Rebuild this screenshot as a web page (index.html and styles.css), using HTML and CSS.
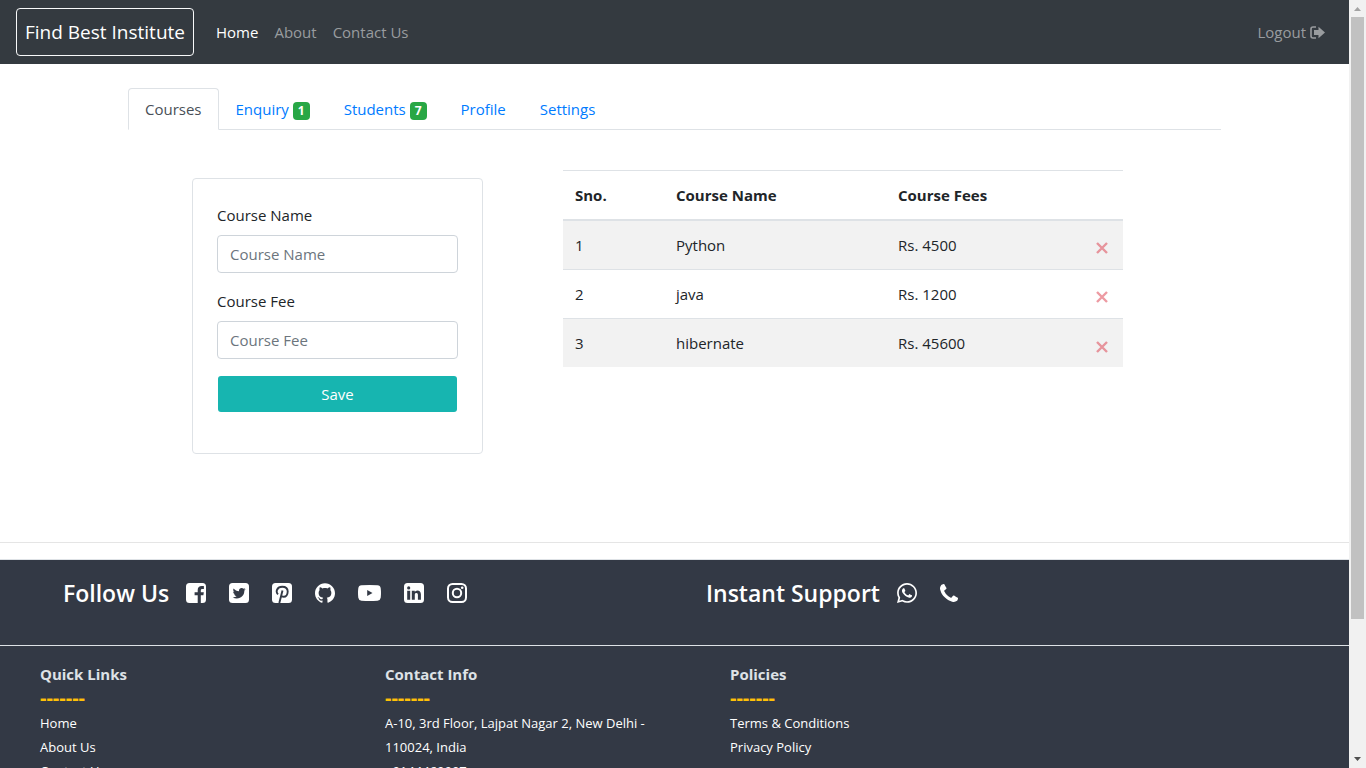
FILE: index.html
```html
<!DOCTYPE html>
<html lang="en">
<head>
<meta charset="utf-8">
<title>Find Best Institute</title>
<link rel="stylesheet" href="styles.css">
</head>
<body>
<div class="window">
<div class="page">
  <nav class="navbar">
    <a class="brand" href="#">Find Best Institute</a>
    <a class="nav-link active" href="#">Home</a>
    <a class="nav-link" href="#">About</a>
    <a class="nav-link" href="#">Contact Us</a>
    <a class="nav-link logout" href="#">Logout
      <svg width="15" height="13" viewBox="0 0 15 13" aria-hidden="true"><path d="M6 1H3Q1 1 1 3v7q0 2 2 2h3" fill="none" stroke="currentColor" stroke-width="1.6"/><path d="M4 4h4.500V.7L15 6.500 8.500 12.300V9H4z" fill="currentColor"/></svg></a>
  </nav>

  <main class="main">
    <ul class="tabs">
      <li><a class="tab selected" href="#">Courses</a></li>
      <li><a class="tab" href="#">Enquiry <span class="badge">1</span></a></li>
      <li><a class="tab" href="#">Students <span class="badge">7</span></a></li>
      <li><a class="tab" href="#">Profile</a></li>
      <li><a class="tab" href="#">Settings</a></li>
    </ul>
    <div class="panel">
      <form class="card">
        <label for="name">Course Name</label>
        <input id="name" type="text" placeholder="Course Name">
        <label for="fee">Course Fee</label>
        <input id="fee" type="text" placeholder="Course Fee">
        <button class="save" type="button">Save</button>
      </form>
      <table class="courses">
        <thead><tr><th class="c-no">Sno.</th><th class="c-name">Course Name</th><th>Course Fees</th><th class="c-del"></th></tr></thead>
        <tbody>
          <tr><td>1</td><td>Python</td><td>Rs. 4500</td><td><button class="del" type="button" aria-label="Delete Python"><svg width="12" height="12" viewBox="0 0 12 12"><path d="M1 1l10 10M11 1l-10 10"/></svg></button></td></tr>
          <tr><td>2</td><td>java</td><td>Rs. 1200</td><td><button class="del" type="button" aria-label="Delete java"><svg width="12" height="12" viewBox="0 0 12 12"><path d="M1 1l10 10M11 1l-10 10"/></svg></button></td></tr>
          <tr><td>3</td><td>hibernate</td><td>Rs. 45600</td><td><button class="del" type="button" aria-label="Delete hibernate"><svg width="12" height="12" viewBox="0 0 12 12"><path d="M1 1l10 10M11 1l-10 10"/></svg></button></td></tr>
        </tbody>
      </table>
    </div>
  </main>
  <hr class="rule">

  <footer class="footer">
    <div class="social">
      <div class="group">
        <h2>Follow Us</h2>
        <a href="#" aria-label="Facebook"><svg width="20" height="20" viewBox="0 0 20 20"><path fill="#fff" d="M3.500 0h13Q20 0 20 3.500v13Q20 20 16.500 20H14.800v-7.700h2.600l.4-3h-3V7.400c0-.9.3-1.500 1.500-1.500h1.600V3.200c-.3 0-1.200-.1-2.300-.1-2.300 0-3.900 1.400-3.900 4v2.200H8.600v3h3.100V20H3.500Q0 20 0 16.500v-13Q0 0 3.500 0z"/></svg></a>
        <a href="#" aria-label="Twitter"><svg width="20" height="20" viewBox="0 0 20 20"><rect width="20" height="20" rx="3.500" fill="#fff"/><path fill="#333945" transform="translate(3.700 3.700) scale(.54)" d="M23.954 4.569c-.885.389-1.830.654-2.825.775 1.014-.611 1.794-1.574 2.163-2.723-.951.555-2.005.959-3.127 1.184-.896-.959-2.173-1.559-3.591-1.559-2.717 0-4.920 2.203-4.920 4.917 0 .39.045.765.127 1.124C7.691 8.094 4.066 6.130 1.640 3.161c-.427.722-.666 1.561-.666 2.475 0 1.710.87 3.213 2.188 4.096-.807-.026-1.566-.248-2.228-.616v.061c0 2.385 1.693 4.374 3.946 4.827-.413.111-.849.171-1.296.171-.314 0-.615-.03-.916-.086.631 1.953 2.445 3.377 4.604 3.417-1.680 1.319-3.809 2.105-6.102 2.105-.39 0-.779-.023-1.170-.067 2.189 1.394 4.768 2.209 7.557 2.209 9.054 0 13.999-7.496 13.999-13.986 0-.209 0-.42-.015-.63.961-.689 1.800-1.560 2.460-2.548z"/></svg></a>
        <a href="#" aria-label="Pinterest"><svg width="20" height="20" viewBox="0 0 20 20"><rect width="20" height="20" rx="3.500" fill="#fff"/><path d="M6 11.300C3.200 8.500 5.200 3.800 10.200 3.800c3.400 0 5.500 2 5.500 4.800 0 3-1.700 5.200-4 5.200-1.400 0-2.200-.7-2.500-1.500M10.500 7.500L7.300 20" fill="none" stroke="#333945" stroke-width="1.900"/></svg></a>
        <a href="#" aria-label="GitHub"><svg width="20" height="20" viewBox="0 0 24 24"><path fill="#fff" d="M12 .297c-6.630 0-12 5.373-12 12 0 5.303 3.438 9.800 8.205 11.385.6.113.82-.258.82-.577 0-.285-.01-1.040-.015-2.040-3.338.724-4.042-1.610-4.042-1.610C4.422 18.070 3.633 17.700 3.633 17.700c-1.087-.744.084-.729.084-.729 1.205.084 1.838 1.236 1.838 1.236 1.070 1.835 2.809 1.305 3.495.998.108-.776.417-1.305.76-1.605-2.665-.3-5.466-1.332-5.466-5.930 0-1.310.465-2.380 1.235-3.220-.135-.303-.54-1.523.105-3.176 0 0 1.005-.322 3.300 1.230.96-.267 1.980-.399 3-.405 1.020.006 2.040.138 3 .405 2.280-1.552 3.285-1.230 3.285-1.230.645 1.653.24 2.873.12 3.176.765.84 1.230 1.910 1.230 3.220 0 4.610-2.805 5.625-5.475 5.920.42.36.81 1.096.81 2.220 0 1.606-.015 2.896-.015 3.286 0 .315.21.69.825.57C20.565 22.092 24 17.592 24 12.297c0-6.627-5.373-12-12-12"/></svg></a>
        <a href="#" aria-label="YouTube"><svg width="23" height="20" viewBox="0 0 23 20"><path fill="#fff" fill-rule="evenodd" d="M3.500 2.300Q11.500 1.500 19.500 2.300 22.300 2.500 22.700 5.300 23.300 10 22.700 14.700 22.300 17.400 19.500 17.700 11.500 18.500 3.500 17.700.7 17.400.3 14.700-.3 10 .3 5.300.7 2.500 3.500 2.300zM9.200 7v6l5.300-3z"/></svg></a>
        <a href="#" aria-label="LinkedIn"><svg width="20" height="20" viewBox="0 0 20 20"><path fill="#fff" fill-rule="evenodd" d="M3.500 0h13Q20 0 20 3.500v13Q20 20 16.500 20h-13Q0 20 0 16.500v-13Q0 0 3.500 0zM3.200 7.700v9h3v-9zM4.700 3.300a1.600 1.600 0 1 0 0 3.200 1.600 1.600 0 0 0 0-3.200zM7.800 7.700v9h3v-5c0-1 .6-1.700 1.600-1.700s1.500.8 1.500 2v4.700h3v-5.200c0-2.700-1.400-4-3.400-4-1.500 0-2.200.8-2.700 1.500V7.700z"/></svg></a>
        <a href="#" aria-label="Instagram"><svg width="20" height="20" viewBox="0 0 20 20"><rect x="1" y="1" width="18" height="18" rx="4.500" fill="none" stroke="#fff" stroke-width="2"/><circle cx="10" cy="10" r="4.200" fill="none" stroke="#fff" stroke-width="2"/><circle cx="15.200" cy="4.800" r="1.300" fill="#fff"/></svg></a>
      </div>
      <div class="group">
        <h2>Instant Support</h2>
        <a href="#" aria-label="WhatsApp"><svg width="20" height="20" viewBox="0 32 448 448"><path fill="#fff" d="M380.900 97.100C339 55.100 283.200 32 223.900 32c-122.400 0-222 99.600-222 222 0 39.100 10.200 77.300 29.600 111L0 480l117.700-30.900c32.400 17.700 68.900 27 106.100 27h.1c122.300 0 224.100-99.600 224.100-222 0-59.300-25.200-115-67.100-157zm-157 341.600c-33.200 0-65.700-8.900-94-25.700l-6.700-4-69.800 18.300L72 359.200l-4.400-7c-18.500-29.400-28.200-63.300-28.200-98.200 0-101.700 82.800-184.500 184.600-184.500 49.300 0 95.600 19.200 130.400 54.100 34.800 34.900 56.200 81.200 56.100 130.500 0 101.800-84.900 184.600-186.600 184.600zm101.200-138.200c-5.500-2.800-32.800-16.200-37.900-18-5.100-1.900-8.800-2.800-12.500 2.800-3.700 5.600-14.300 18-17.600 21.800-3.200 3.700-6.500 4.200-12 1.400-32.600-16.300-54-29.100-75.500-66-5.700-9.800 5.700-9.100 16.300-30.300 1.800-3.700.9-6.900-.5-9.700-1.400-2.800-12.500-30.100-17.100-41.200-4.500-10.800-9.100-9.300-12.500-9.500-3.200-.2-6.900-.2-10.600-.2-3.700 0-9.700 1.400-14.800 6.900-5.100 5.600-19.400 19-19.400 46.300 0 27.300 19.900 53.700 22.600 57.400 2.800 3.700 39.100 59.700 94.800 83.800 35.200 15.200 49 16.500 66.600 13.900 10.700-1.600 32.800-13.400 37.400-26.400 4.600-13 4.600-24.100 3.200-26.400-1.300-2.500-5-3.900-10.500-6.600z"/></svg></a>
        <a href="#" aria-label="Phone"><svg width="18" height="18" viewBox="0 128 1408 1408"><path fill="#fff" d="M1408 1240q0 27-10 70.500t-21 68.500q-21 50-122 106-94 51-186 51-27 0-53-3.500t-57.500-12.500-47-14.500-55.500-20.500-49-18q-98-35-175-83-127-79-264-216t-216-264q-48-77-83-175-3-9-18-49t-20.500-55.500-14.500-47-12.500-57.500-3.500-53q0-92 51-186 56-101 106-122 25-11 68.500-21t70.500-10q14 0 21 3 18 6 53 76 11 19 30 54t35 63.500 31 53.500q3 4 17.500 25t21.500 35.500 7 28.500q0 20-28.500 50t-62 55-62 53-28.500 46q0 9 5 22.500t8.500 20.500 14 24 11.500 19q76 137 174 235t235 174q2 1 19 11.500t24 14 20.500 8.500 22.500 5q18 0 46-28.500t53-62 55-62 50-28.500q14 0 28.500 7t35.500 21.500 25 17.500q25 15 53.500 31t63.500 35 54 30q70 35 76 53 3 7 3 21z"/></svg></a>
      </div>
    </div>
    <div class="columns">
      <section>
        <h3>Quick Links</h3>
        <div class="dashes">-------</div>
        <a href="#">Home</a>
        <a href="#">About Us</a>
        <a href="#">Contact Us</a>
      </section>
      <section>
        <h3>Contact Info</h3>
        <div class="dashes">-------</div>
        <p>A-10, 3rd Floor, Lajpat Nagar 2, New Delhi - 110024, India</p>
        <p>+9144469997</p>
      </section>
      <section>
        <h3>Policies</h3>
        <div class="dashes">-------</div>
        <a href="#">Terms &amp; Conditions</a>
        <a href="#">Privacy Policy</a>
      </section>
    </div>
  </footer>
</div>
<div class="scrollbar" aria-hidden="true">
  <svg class="arrow" width="17" height="17" viewBox="0 0 17 17"><path fill="#a3a3a3" d="M5 11l3.500-4 3.500 4z"/></svg>
  <div class="track"><div class="thumb"></div></div>
  <svg class="arrow" width="17" height="17" viewBox="0 0 17 17"><path fill="#505050" d="M5 6h7l-3.500 4z"/></svg>
</div>
</div>
</body>
</html>
```
FILE: styles.css
```css
* { box-sizing: border-box; }
body { margin: 0; font: 15px/24px "Segoe UI", "Open Sans", "Noto Sans", sans-serif; color: #212529; background: #fff; }
a { text-decoration: none; }
.window { display: flex; height: 100vh; overflow: hidden; }
.page { flex: 1; min-width: 0; overflow: hidden; }

.navbar { display: flex; align-items: center; padding: 8px 16px; background: #343a40; }
.brand { padding: 8px; margin-right: 14px; border: 1px solid #f8f9fa; border-radius: 4px; font-size: 19px; line-height: 30px; color: #fff; }
.nav-link { padding: 8px; color: #999c9f; }
.nav-link.active { color: #fff; }
.logout { display: flex; align-items: center; gap: 4px; margin-left: auto; }

.main { padding: 24px 128px 72px; }
.tabs { display: flex; margin: 0; padding: 0; list-style: none; border-bottom: 1px solid #dee2e6; }
.tab { display: block; padding: 8px 16px; margin-bottom: -1px; border: 1px solid transparent; border-radius: 4px 4px 0 0; color: #007bff; }
.tab.selected { color: #495057; background: #fff; border-color: #dee2e6 #dee2e6 #fff; }
.badge { display: inline-block; padding: 3px 5px; border-radius: 4px; background: #28a745; color: #fff; font-size: 12px; line-height: 12px; font-weight: 700; }

.panel { display: flex; align-items: flex-start; gap: 80px; padding: 40px 98px 0 64px; }
.card { display: flex; flex-direction: column; flex: 0 0 291px; margin-top: 8px; padding: 24px 24px 40px; border: 1px solid #dee2e6; border-radius: 4px; }
.card label { margin-bottom: 8px; }
.card input { width: 100%; height: 38px; margin: 0 0 16px; padding: 6px 12px; border: 1px solid #ced4da; border-radius: 4px; font: inherit; background: #fff; }
.card input::placeholder { color: #6c757d; opacity: 1; }
.save { height: 36px; margin: 1px; border: 0; border-radius: 3px; background: #17b5b0; color: #fff; font: inherit; }

.courses { flex: 1; border-collapse: collapse; table-layout: fixed; text-align: left; }
.courses th, .courses td { height: 49px; padding: 12px; border-top: 1px solid #dee2e6; }
.courses th { padding: 12px 12px 11px; border-bottom: 2px solid #dee2e6; font-weight: 700; }
.courses tbody tr:nth-child(odd) { background: #f2f2f2; }
.c-no { width: 101px; }
.c-name { width: 222px; }
.c-del { width: 64px; }
.courses td:last-child { text-align: right; }
.del { display: inline-flex; align-items: flex-end; height: 16px; margin: 0; padding: 0 3px 0 0; border: 0; background: none; vertical-align: middle; }
.del path { fill: none; stroke: #dc3545; stroke-opacity: .5; stroke-width: 2.4; }

.rule { margin: 16px 0; border: 0; border-top: 1px solid #e5e5e5; }
.footer { background: #333945; color: #fff; border-top: 1px solid #dee2e6; }
.social { display: flex; height: 86px; padding: 16px 63px; border-bottom: 1px solid #dee2e6; }
.group { display: flex; flex: 0 0 643px; align-items: center; gap: 23px; height: 34px; }
.group h2 { margin: 0 -6px 0 0; font-size: 23px; line-height: 32px; font-weight: 600; }
.group a { display: flex; }
.columns { display: flex; padding: 16px 40px; font-size: 13px; }
.columns section { flex: 0 0 345px; padding-right: 60px; }
.columns h3 { margin: 0; font-size: 15px; line-height: 24px; font-weight: 700; color: #dee2e6; }
.dashes { margin-bottom: 1px; color: #ffc107; font-size: 20px; font-weight: 700; }
.columns p { margin: 0; }
.columns a { display: block; color: #fff; }

.scrollbar { display: flex; flex: 0 0 17px; flex-direction: column; background: #f1f1f1; }
.arrow { display: block; }
.track { flex: 1; padding: 0 2px; }
.thumb { height: 82%; background: #c1c1c1; }
```
